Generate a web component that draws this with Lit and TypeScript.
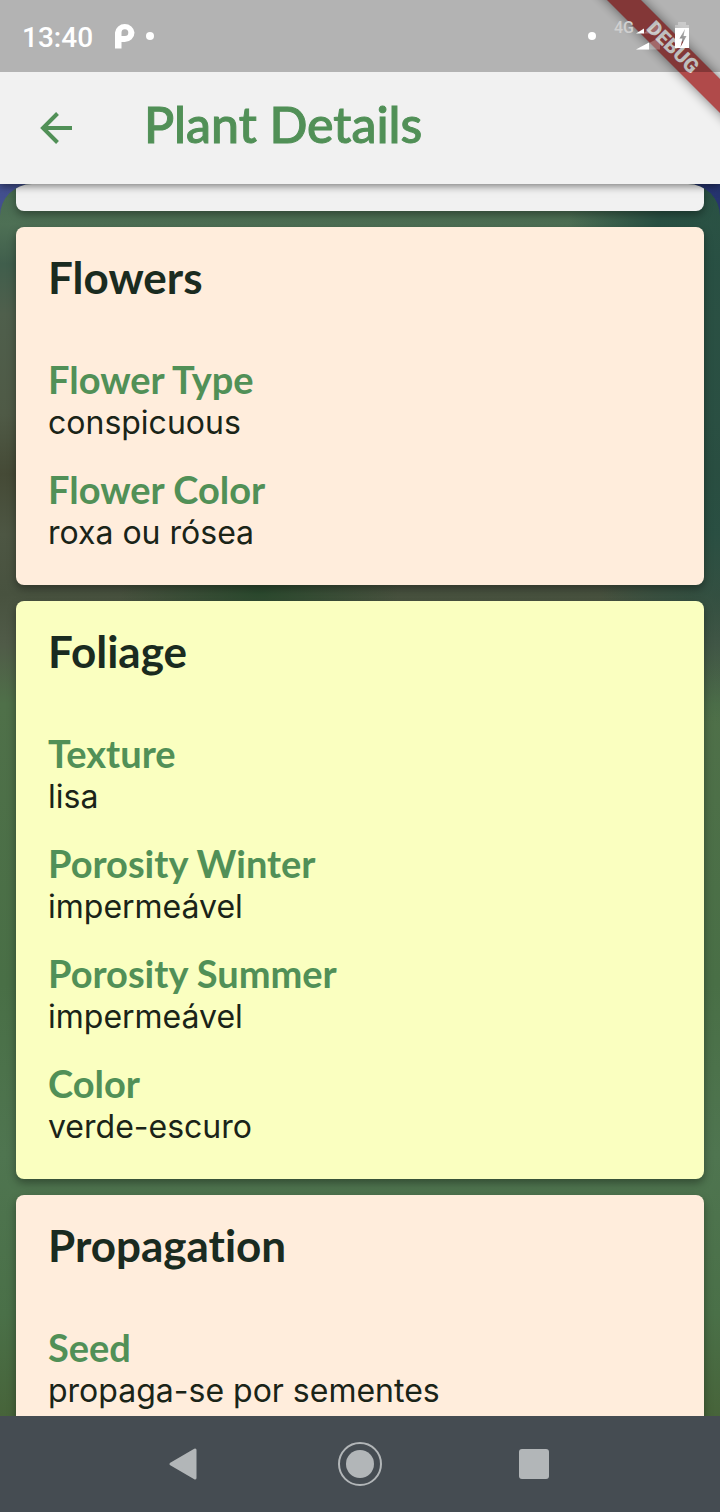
import { LitElement, html, css, svg } from "lit";
import { customElement, property } from "lit/decorators.js";

interface Entry {
  label: string;
  value: string;
}
interface Section {
  title: string;
  tone: "peach" | "lime";
  entries: Entry[];
}

const SECTIONS: Section[] = [
  {
    title: "Flowers",
    tone: "peach",
    entries: [
      { label: "Flower Type", value: "conspicuous" },
      { label: "Flower Color", value: "roxa ou rósea" },
    ],
  },
  {
    title: "Foliage",
    tone: "lime",
    entries: [
      { label: "Texture", value: "lisa" },
      { label: "Porosity Winter", value: "impermeável" },
      { label: "Porosity Summer", value: "impermeável" },
      { label: "Color", value: "verde-escuro" },
    ],
  },
  {
    title: "Propagation",
    tone: "peach",
    entries: [{ label: "Seed", value: "propaga-se por sementes" }],
  },
];

@customElement("status-bar")
export class StatusBar extends LitElement {
  static styles = css`
    :host {
      display: flex;
      align-items: center;
      justify-content: space-between;
      height: 72px;
      padding: 0 28px 0 22px;
      box-sizing: border-box;
      color: #fff;
      background: rgba(0, 0, 0, 0.255);
      font: 500 28px/36px Roboto, sans-serif;
    }
    .group {
      display: flex;
      align-items: center;
    }
    .clock {
      padding-top: 4px;
    }
    .app {
      margin-left: 22px;
    }
    svg {
      display: block;
    }
    .net {
      font-size: 16px;
      line-height: 16px;
      color: #d0d0d0;
      margin: -16px 0 0 18px;
    }
  `;

  render() {
    return html`
      <div class="group">
        <time class="clock">13:40</time>
        <svg class="app" width="40" height="26" viewBox="0 0 40 26" aria-hidden="true">
          <path
            d="M0 25.500V9.500a9.800 9.500 0 0 1 19.500 0a9.800 9.500 0 0 1-9.800 9.500H6.500v6.500zM6.500 13H9.800a3.400 3.400 0 1 0-3.300-3.400z"
            fill="#fff"
            fill-rule="evenodd"
          />
          <circle cx="35" cy="13" r="4" fill="#fff" />
        </svg>
      </div>
      <div class="group">
        <svg width="8" height="8" aria-hidden="true"><circle cx="4" cy="4" r="4" fill="#fff" /></svg>
        <span class="net">4G</span>
        <svg width="58" height="28" viewBox="0 0 58 28" aria-hidden="true">
          <path d="M9 11.500h16v-11z" fill="#fff" opacity=".25" />
          <path d="M2 11.500h8v-5z" fill="#fff" />
          <path d="M2 27.500h24v-12z" fill="#fff" opacity=".25" />
          <path d="M2 27.500h13v-7z" fill="#fff" />
          <path d="M44 0h8v3h3v3H41V3h3z" fill="#fff" opacity=".3" />
          <path d="M41 6h14v20H41zM51 7l-5.500 9.500h3L46.500 25l6-11h-3z" fill="#fff" fill-rule="evenodd" />
        </svg>
      </div>
    `;
  }
}

@customElement("debug-banner")
export class DebugBanner extends LitElement {
  static styles = css`
    :host {
      position: absolute;
      top: 0;
      right: 0;
      pointer-events: none;
    }
    svg {
      display: block;
    }
    text {
      font: 900 20px Roboto, sans-serif;
    }
  `;

  render() {
    return html`<svg width="140" height="140" viewBox="-12 0 140 140" aria-label="Debug build">
      ${svg`
        <defs>
          <filter id="soft" x="-50%" y="-50%" width="200%" height="200%">
            <feGaussianBlur stdDeviation="6" />
          </filter>
        </defs>
        <polygon points="-5,-20 29,-20 150,101 150,135" fill="#000" opacity=".5" filter="url(#soft)" />
        <polygon points="15,0 49,0 128,79 128,113" fill="#b04a4a" />
        <text transform="translate(81 47) rotate(45)" y="7" text-anchor="middle" fill="#fff">DEBUG</text>
      `}
    </svg>`;
  }
}

@customElement("detail-card")
export class DetailCard extends LitElement {
  @property({ attribute: false }) section!: Section;

  static styles = css`
    :host {
      display: block;
    }
    .card {
      padding: 22px 32px 10px;
      border-radius: 8px;
      box-shadow: 0 4px 8px rgba(0, 0, 0, 0.35);
      color: #1a2b20;
    }
    .peach {
      background: #ffeddc;
    }
    .lime {
      background: #faffc0;
    }
    h2 {
      margin: 0 0 50px;
      font: 700 44px/56px Lato, sans-serif;
      font-variant-ligatures: none;
    }
    dl {
      margin: 0;
    }
    .entry {
      padding-bottom: 22px;
    }
    dt {
      font: 700 38px/48px Lato, sans-serif;
      color: #519057;
    }
    dd {
      margin: 0;
      font: 400 32px/40px Inter, sans-serif;
      color: #1a2418;
    }
  `;

  render() {
    const { title, tone, entries } = this.section;
    return html`
      <section class="card ${tone}">
        <h2>${title}</h2>
        <dl>
          ${entries.map(
            (e) => html`<div class="entry"><dt>${e.label}</dt><dd>${e.value}</dd></div>`
          )}
        </dl>
      </section>
    `;
  }
}

@customElement("app-root")
export class AppRoot extends LitElement {
  static styles = css`
    :host {
      display: flex;
      flex-direction: column;
      height: 100vh;
      overflow: hidden;
    }
    .top {
      position: relative;
      z-index: 1;
      flex: none;
      background: #f1f1f1;
      box-shadow: 0 2px 8px rgba(0, 0, 0, 0.5);
    }
    status-bar {
      position: relative;
    }
    .bar {
      display: flex;
      align-items: center;
      height: 112px;
      padding: 0 32px;
      gap: 64px;
    }
    button {
      display: grid;
      place-items: center;
      padding: 0;
      border: 0;
      background: none;
      color: inherit;
      cursor: pointer;
    }
    .back {
      width: 48px;
      height: 48px;
    }
    h1 {
      margin: 0;
      padding-bottom: 8px;
      font: 500 50px/60px Lato, sans-serif;
      color: #519057;
      -webkit-text-stroke: 1px #519057;
    }
    .page {
      flex: 1;
      min-height: 0;
      overflow: hidden;
      background: linear-gradient(90deg, #43508f, #26346f);
    }
    .sheet {
      display: flex;
      flex-direction: column;
      gap: 16px;
      height: 100%;
      padding: 0 16px;
      box-sizing: border-box;
      overflow: hidden;
      border-radius: 32px 32px 0 0;
      background: radial-gradient(
          160px 380px at 100% 160px,
          rgba(38, 78, 66, 0.9) 50%,
          transparent
        ),
        radial-gradient(
          140px 60px at 36% 408px,
          rgba(36, 72, 42, 0.8),
          transparent
        ),
        linear-gradient(
          #466a50 0,
          #4e7055 40px,
          #405e4c 80px,
          #4f5f4c 130px,
          #4f5a46 230px,
          #454a36 290px,
          #4d5643 350px,
          #48523f 410px,
          #505b48 460px,
          #4f7049 520px,
          #496f46 800px,
          #4f7550 970px,
          #4a7048 1130px,
          #47643a 1232px
        );
    }
    .tail {
      flex: none;
      height: 27px;
      border-radius: 0 0 8px 8px;
      background: #f1f1f1;
      box-shadow: 0 4px 8px rgba(0, 0, 0, 0.35);
    }
    detail-card {
      flex: none;
    }
    nav {
      flex: none;
      display: flex;
      align-items: center;
      justify-content: center;
      gap: 126px;
      height: 96px;
      background: #454c52;
    }
    nav button {
      width: 48px;
      height: 48px;
    }
  `;

  render() {
    return html`
      <header class="top">
        <debug-banner></debug-banner>
        <status-bar></status-bar>
        <div class="bar">
          <button class="back" aria-label="Back">
            <svg width="32" height="32" viewBox="0 0 32 32" fill="none" stroke="#519057" stroke-width="4">
              <path d="M32 16H3M17.500 1.500L3 16l14.500 14.500" />
            </svg>
          </button>
          <h1>Plant Details</h1>
        </div>
      </header>
      <main class="page">
        <div class="sheet">
          <div class="tail"></div>
          ${SECTIONS.map((s) => html`<detail-card .section=${s}></detail-card>`)}
        </div>
      </main>
      <nav>
        <button aria-label="Back">
          <svg width="36" height="34" viewBox="0 0 36 34">
            <path d="M3 17L27 3v28z" fill="#b2b6b8" stroke="#b2b6b8" stroke-width="3" stroke-linejoin="round" />
          </svg>
        </button>
        <button aria-label="Home">
          <svg width="44" height="44" viewBox="0 0 44 44">
            <circle cx="22" cy="22" r="21" fill="none" stroke="#b2b6b8" stroke-width="2" />
            <circle cx="22" cy="22" r="14" fill="#b2b6b8" />
          </svg>
        </button>
        <button aria-label="Recent apps">
          <svg width="30" height="30" viewBox="0 0 30 30">
            <rect width="30" height="30" rx="3" fill="#b2b6b8" />
          </svg>
        </button>
      </nav>
    `;
  }
}
